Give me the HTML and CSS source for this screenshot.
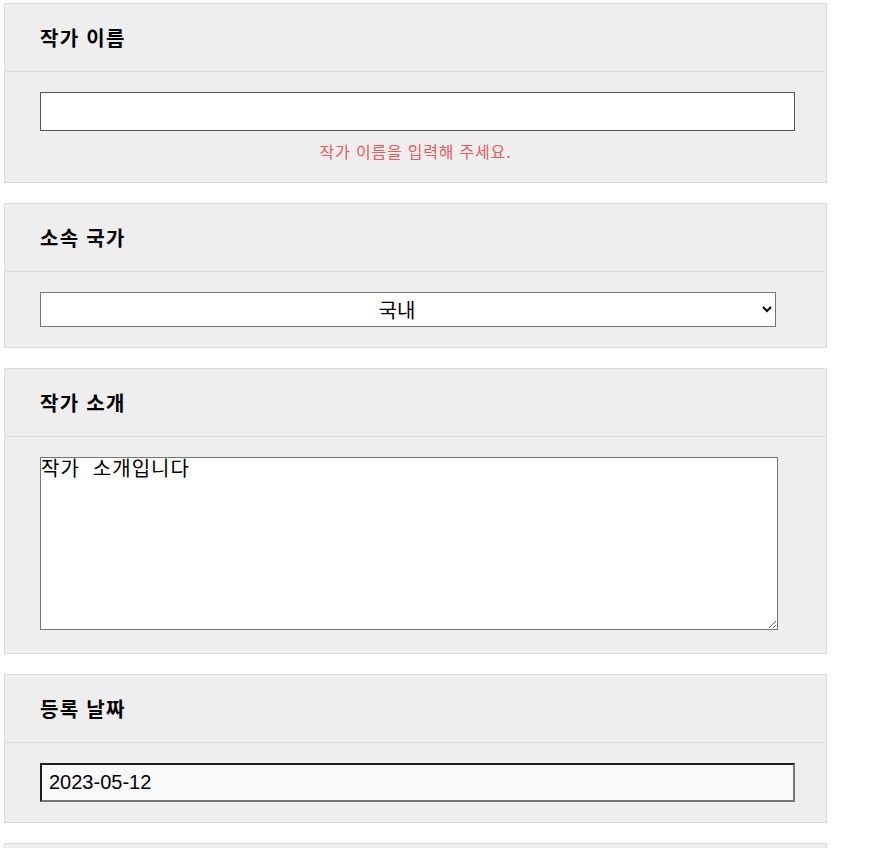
FILE: index.html
```html
<!DOCTYPE html>
<html lang="ko">
<head>
<meta charset="utf-8">
<title>작가 등록</title>
<link rel="stylesheet" href="styles.css">
</head>
<body>
<main class="form">
  <section class="card">
    <div class="card-head">작가 이름</div>
    <div class="card-body">
      <input class="field field-name" type="text" value="">
      <p class="error">작가 이름을 입력해 주세요.</p>
    </div>
  </section>
  <section class="card">
    <div class="card-head">소속 국가</div>
    <div class="card-body">
      <select class="field field-select">
        <option>국내</option>
        <option>해외</option>
      </select>
    </div>
  </section>
  <section class="card">
    <div class="card-head">작가 소개</div>
    <div class="card-body">
      <textarea class="field field-area">작가 소개입니다</textarea>
    </div>
  </section>
  <section class="card">
    <div class="card-head">등록 날짜</div>
    <div class="card-body">
      <input class="field field-date" type="text" value="2023-05-12" readonly>
    </div>
  </section>
  <section class="card">
    <div class="card-head">작가 사진</div>
    <div class="card-body"></div>
  </section>
</main>
</body>
</html>
```
FILE: styles.css
```css
html, body {
  margin: 0;
  padding: 0;
  background: #fff;
}
body {
  font-family: "Noto Sans CJK KR", "Noto Sans", sans-serif;
}
.form {
  width: 823px;
  padding: 3px 0 0 4px;
  display: flex;
  flex-direction: column;
  gap: 20px;
}
.card {
  border: 1px solid #dcdcdf;
  background: #eeeeee;
}
.card-head {
  padding: 20px 35px;
  font-size: 20px;
  line-height: 27px;
  letter-spacing: 1.3px;
  font-weight: bold;
  color: #000;
  border-bottom: 1px solid #dcdcdf;
}
.card-body {
  padding: 20px 35px;
}
.field {
  display: block;
  box-sizing: border-box;
  margin: 0;
  font-family: "Noto Sans CJK KR", sans-serif;
  color: #000;
  background: #fff;
}
.field-name {
  width: 755px;
  height: 39px;
  border: 1px solid #555;
  padding: 0 8px;
  font-size: 18px;
}
.error {
  margin: 10px 0 0;
  text-align: center;
  font-size: 16px;
  line-height: 21px;
  letter-spacing: 0.8px;
  color: #ea5a5a;
}
.field-select {
  width: 736px;
  height: 35px;
  border: 1px solid #767676;
  border-radius: 0;
  padding-right: 10px;
  font-size: 20px;
  text-align: center;
  text-align-last: center;
}
.field-area {
  width: 738px;
  height: 173px;
  border: 1px solid #767676;
  padding: 0;
  margin-bottom: 3px;
  font-size: 20px;
  line-height: 1.1;
  letter-spacing: 1px;
  font-family: "DejaVu Sans Mono", "Noto Sans CJK KR", monospace;
  resize: both;
}
.field-date {
  width: 755px;
  height: 39px;
  border: 2px solid #767676;
  border-color: #1e1e1e #767676 #767676 #1e1e1e;
  background: #f9f9f9;
  padding: 0 7px;
  font-family: "Liberation Sans", Arial, sans-serif;
  font-size: 20px;
}
```
